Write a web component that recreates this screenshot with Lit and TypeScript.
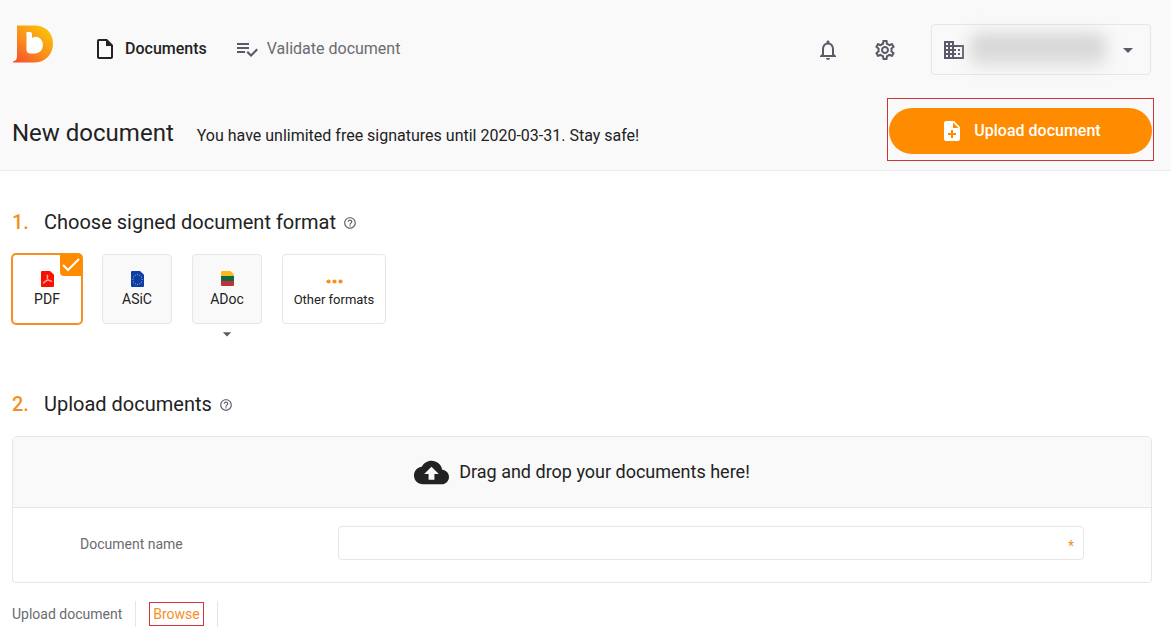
import { LitElement, html, css, svg, nothing } from "lit";
import { customElement, property, state } from "lit/decorators.js";
import { classMap } from "lit/directives/class-map.js";

const ICONS: Record<string, string> = {
  file: "M14 2H6c-1.1 0-2 .9-2 2v16c0 1.1.9 2 2 2h12c1.1 0 2-.9 2-2V8l-6-6zM6 20V4h7v5h5v11H6z",
  validate:
    "M14 10H2v2h12v-2zm0-4H2v2h12V6zM2 16h8v-2H2v2zm19.5-4.5L23 13l-6.99 7-4.51-4.5L13 14l3.01 3 5.49-5.5z",
  bell: "M12 22c1.1 0 2-.9 2-2h-4c0 1.1.9 2 2 2zm6-6v-5c0-3.07-1.63-5.64-4.5-6.32V4c0-.83-.67-1.5-1.5-1.5s-1.5.67-1.5 1.5v.68C7.64 5.36 6 7.92 6 11v5l-2 2v1h16v-1l-2-2zm-2 1H8v-6c0-2.48 1.51-4.5 4-4.5s4 2.02 4 4.5v6z",
  settings:
    "M19.43 12.98c.04-.32.07-.64.07-.98 0-.34-.03-.66-.07-.98l2.11-1.65c.19-.15.24-.42.12-.64l-2-3.46c-.09-.16-.26-.25-.44-.25-.06 0-.12.01-.17.03l-2.49 1c-.52-.4-1.08-.73-1.69-.98l-.38-2.65C14.46 2.18 14.25 2 14 2h-4c-.25 0-.46.18-.49.42l-.38 2.65c-.61.25-1.17.59-1.69.98l-2.49-1c-.06-.02-.12-.03-.18-.03-.17 0-.34.09-.43.25l-2 3.46c-.13.22-.07.49.12.64l2.11 1.65c-.04.32-.07.65-.07.98 0 .33.03.66.07.98l-2.11 1.65c-.19.15-.24.42-.12.64l2 3.46c.09.16.26.25.44.25.06 0 .12-.01.17-.03l2.49-1c.52.4 1.08.73 1.69.98l.38 2.65c.03.24.24.42.49.42h4c.25 0 .46-.18.49-.42l.38-2.65c.61-.25 1.17-.59 1.69-.98l2.49 1c.06.02.12.03.18.03.17 0 .34-.09.43-.25l2-3.46c.12-.22.07-.49-.12-.64l-2.11-1.65zm-1.98-1.71c.04.31.05.52.05.73 0 .21-.02.43-.05.73l-.14 1.13.89.7 1.08.84-.7 1.21-1.27-.51-1.04-.42-.9.68c-.43.32-.84.56-1.25.73l-1.06.43-.16 1.13-.2 1.35h-1.4l-.19-1.35-.16-1.13-1.06-.43c-.43-.18-.83-.41-1.23-.71l-.91-.7-1.06.43-1.27.51-.7-1.21 1.08-.84.89-.7-.14-1.13c-.03-.31-.05-.54-.05-.74s.02-.43.05-.73l.14-1.13-.89-.7-1.08-.84.7-1.21 1.27.51 1.04.42.9-.68c.43-.32.84-.56 1.25-.73l1.06-.43.16-1.13.2-1.35h1.39l.19 1.35.16 1.13 1.06.43c.43.18.83.41 1.23.71l.91.7 1.06-.43 1.27-.51.7 1.21-1.07.85-.89.7.14 1.13zM12 8c-2.21 0-4 1.79-4 4s1.79 4 4 4 4-1.79 4-4-1.79-4-4-4zm0 6c-1.1 0-2-.9-2-2s.9-2 2-2 2 .9 2 2-.9 2-2 2z",
  business:
    "M12 7V3H2v18h20V7H12zM6 19H4v-2h2v2zm0-4H4v-2h2v2zm0-4H4V9h2v2zm0-4H4V5h2v2zm4 12H8v-2h2v2zm0-4H8v-2h2v2zm0-4H8V9h2v2zm0-4H8V5h2v2zm10 12h-8v-2h2v-2h-2v-2h2v-2h-2V9h8v10zm-2-8h-2v2h2v-2zm0 4h-2v2h2v-2z",
  add: "M14 2H6c-1.1 0-1.99.9-1.99 2L4 20c0 1.1.89 2 1.99 2H18c1.1 0 2-.9 2-2V8l-6-6zm2 14h-3v3h-2v-3H8v-2h3v-3h2v3h3v2zm-3-7V3.5L18.5 9H13z",
  cloud:
    "M19.35 10.04C18.67 6.59 15.64 4 12 4 9.11 4 6.6 5.64 5.35 8.04 2.34 8.36 0 10.91 0 14c0 3.31 2.69 6 6 6h13c2.76 0 5-2.24 5-5 0-2.64-2.05-4.78-4.65-4.96zM14 13v4h-4v-4H7l5-5 5 5h-3z",
  help: "M11 18h2v-2h-2v2zm1-16C6.48 2 2 6.48 2 12s4.48 10 10 10 10-4.48 10-10S17.52 2 12 2zm0 18c-4.41 0-8-3.59-8-8s3.59-8 8-8 8 3.59 8 8-3.59 8-8 8zm0-14c-2.21 0-4 1.79-4 4h2c0-1.1.9-2 2-2s2 .9 2 2c0 2-3 1.75-3 5h2c0-2.25 3-2.5 3-5 0-2.21-1.79-4-4-4z",
  caret: "M7 10l5 5 5-5z",
};

@customElement("ui-icon")
class UiIcon extends LitElement {
  @property() name = "";
  static styles = css`
    :host {
      display: inline-block;
      flex: none;
      width: 24px;
      height: 24px;
    }
    svg {
      display: block;
      width: 100%;
      height: 100%;
      fill: currentColor;
    }
  `;
  render() {
    return html`<svg viewBox="0 0 24 24" aria-hidden="true"><path d=${ICONS[this.name] ?? ""}></path></svg>`;
  }
}

// Gold stars of the EU flag, set on a circle.
const stars = Array.from({ length: 12 }, (_, i) => {
  const a = (i * Math.PI) / 6;
  return svg`<circle cx=${6.5 + 4.6 * Math.sin(a)} cy=${8.5 - 5 * Math.cos(a)} r="0.5" fill="#d8d27a"></circle>`;
});

const SHEET = "M1 0H9l4 3.8V15a1 1 0 0 1-1 1H1A1 1 0 0 1 0 15V1A1 1 0 0 1 1 0z";

const formatIcons: Record<string, unknown> = {
  pdf: html`<svg class="glyph" viewBox="0 0 13 16" aria-hidden="true">
    <path fill="#fa0f00" d=${SHEET}></path>
    <path
      fill="none"
      stroke="#fff"
      stroke-width="0.6"
      stroke-linejoin="round"
      d="M2.300 12.200c-.8-.7.9-2 3.700-2.600 2.700-.5 5-.2 4.900.6-.2 1.100-2.900-.2-4-2.100C5.900 6.500 5.600 4 6.300 3.900c1-.1.500 2.900-.5 5-1 2.100-2.600 4-3.500 3.300z"
    ></path>
  </svg>`,
  asic: html`<svg class="glyph" viewBox="0 0 13 16" aria-hidden="true">
    <path fill="#0b3ea8" d=${SHEET}></path>
    ${stars}
  </svg>`,
  adoc: html`<svg class="glyph" viewBox="0 0 13 16" aria-hidden="true">
    <path fill="#fbb91f" d="M1 0H9.500L13 3.500V5H0V1A1 1 0 0 1 1 0z"></path>
    <path fill="#0a6b45" d="M0 5h13v5H0z"></path>
    <path fill="#c1313a" d="M0 10h13v4a1 1 0 0 1-1 1H1a1 1 0 0 1-1-1z"></path>
  </svg>`,
  other: html`<svg class="glyph dots" viewBox="0 0 17 5" aria-hidden="true">
    <circle cx="2.500" cy="2.500" r="2.100"></circle>
    <circle cx="8.500" cy="2.500" r="2.100"></circle>
    <circle cx="14.500" cy="2.500" r="2.100"></circle>
  </svg>`,
};

const formats = [
  { id: "pdf", label: "PDF" },
  { id: "asic", label: "ASiC" },
  { id: "adoc", label: "ADoc", more: true },
];

@customElement("app-root")
class AppRoot extends LitElement {
  @state() private format = "pdf";

  static styles = css`
    :host {
      display: block;
      font-family: Roboto, "Liberation Sans", sans-serif;
      font-size: 16px;
      line-height: 20px;
      color: #222;
      background: #fff;
    }
    * {
      box-sizing: border-box;
    }
    button,
    input {
      font: inherit;
      color: inherit;
    }
    button {
      border: 0;
      padding: 0;
      background: none;
      cursor: pointer;
    }
    a {
      color: inherit;
      text-decoration: none;
    }
    h1,
    h2,
    p {
      margin: 0;
      font-weight: 400;
    }

    .header {
      padding: 24px 17px 9px 12px;
      background: #f9f9f9;
      border-bottom: 1px solid #ebebeb;
    }
    .topbar {
      display: flex;
      align-items: center;
      padding-right: 3px;
    }
    .home {
      align-self: flex-start;
      margin-right: 39px;
    }
    .logo {
      display: block;
      width: 42px;
      height: 40px;
    }
    .nav {
      display: flex;
      gap: 28px;
      padding-bottom: 2px;
    }
    .nav a {
      display: flex;
      align-items: center;
      gap: 8px;
      color: #6b6b70;
    }
    .nav a.current {
      font-weight: 500;
      color: #222;
    }
    .nav ui-icon {
      color: #5a5a68;
    }
    .nav .current ui-icon {
      color: #222;
    }
    .tools {
      display: flex;
      align-items: center;
      gap: 33px;
      margin-left: auto;
      color: #5a5a68;
    }
    .tools button {
      display: flex;
      align-items: center;
    }
    .tools .account {
      width: 220px;
      height: 51px;
      margin-left: 1px;
      padding: 0 10px;
      border: 1px solid #e6e6e6;
      border-radius: 4px;
    }
    .redacted {
      flex: 1;
      height: 32px;
      margin: 0 10px 0 4px;
      border-radius: 8px;
      background: linear-gradient(#cdcdcd, #dadada 50%, #dfdfdf);
      filter: blur(8px);
    }

    .titlebar {
      display: flex;
      align-items: center;
      justify-content: space-between;
      margin-top: 23px;
    }
    .headline {
      display: flex;
      align-items: baseline;
      gap: 23px;
      padding-top: 7px;
    }
    h1 {
      font-size: 24px;
      line-height: 32px;
    }
    .marked {
      border: 1px solid #d0333c;
    }
    .cta {
      padding: 9px 1px 6px;
    }
    .upload {
      display: flex;
      align-items: center;
      justify-content: center;
      gap: 10px;
      width: 263px;
      height: 46px;
      border-radius: 23px;
      background: #ff8c00;
      color: #fff;
      font-weight: 500;
    }

    .content {
      padding: 39px 19px 10px 12px;
    }
    .step {
      display: flex;
      align-items: center;
      font-size: 20px;
      line-height: 24px;
    }
    .step .number {
      width: 32px;
      font-weight: 500;
      color: #f5901f;
    }
    .step .help {
      margin-left: 7px;
      padding-top: 2px;
      color: #5a5a68;
    }
    .help ui-icon {
      display: block;
      width: 14px;
      height: 14px;
    }

    .formats {
      display: flex;
      gap: 20px;
      height: 158px;
      margin: 0;
      padding: 20px 0 0;
      border: 0;
    }
    .tile {
      position: relative;
      display: flex;
      flex-direction: column;
      align-items: center;
      justify-content: center;
      gap: 4px;
      min-width: 70px;
      height: 70px;
      padding: 0 10px;
      border: 1px solid #e6e6e6;
      border-radius: 4px;
      background: #f9f9f9;
      font-size: 14px;
      line-height: 16px;
      cursor: pointer;
    }
    .tile input {
      position: absolute;
      inset: 0;
      width: 100%;
      height: 100%;
      margin: 0;
      opacity: 0;
      cursor: pointer;
    }
    .tile.selected {
      border-color: #f5901f;
      background: #fff;
      box-shadow: 0 0 0 1px #f5901f;
    }
    .tile.other {
      min-width: 104px;
      background: #fff;
      font-size: 13px;
      gap: 8px;
      padding-top: 8px;
    }
    .tick {
      position: absolute;
      top: -1px;
      right: -1px;
      width: 22px;
      height: 22px;
      border-radius: 0 3px 0 4px;
      background: #ff8c00;
    }
    .more {
      display: flex;
      flex-direction: column;
      align-items: center;
    }
    .more ui-icon {
      width: 20px;
      height: 20px;
      color: #5a5a68;
    }
    .glyph {
      width: 13px;
      height: 16px;
    }
    .glyph.dots {
      width: 17px;
      height: 5px;
      fill: #f5901f;
    }

    .panel {
      margin-top: 20px;
      border: 1px solid #e6e6e6;
      border-radius: 4px;
    }
    .drop {
      display: flex;
      align-items: center;
      justify-content: center;
      gap: 10px;
      height: 71px;
      border-bottom: 1px solid #e6e6e6;
      background: #f9f9f9;
      font-size: 18px;
    }
    .drop ui-icon {
      width: 35px;
      height: 35px;
    }
    .field {
      display: grid;
      grid-template-columns: 258px 1fr;
      align-items: center;
      padding: 18px 67px 22px;
      font-size: 14px;
      color: #6b6b70;
    }
    .field label {
      padding-top: 2px;
    }
    .box {
      position: relative;
    }
    .box input {
      display: block;
      width: 100%;
      height: 34px;
      padding: 0 24px 0 10px;
      border: 1px solid #e6e6e6;
      border-radius: 4px;
      background: #fff;
    }
    .required {
      position: absolute;
      top: 10px;
      right: 10px;
      color: #f5901f;
    }
    .actions {
      display: flex;
      align-items: center;
      margin-top: 18px;
      font-size: 14px;
      color: #6b6b70;
    }
    .actions .cell {
      display: flex;
      align-items: center;
      height: 26px;
      padding-right: 13px;
      margin-right: 13px;
      border-right: 1px solid #e6e6e6;
    }
    .browse {
      height: 24px;
      padding: 0 3px;
      color: #f5901f;
    }
  `;

  private renderTile(id: string, label: string) {
    const selected = this.format === id;
    return html`<label class=${classMap({ tile: true, selected, other: id === "other" })}>
      <input
        type="radio"
        name="format"
        value=${id}
        .checked=${selected}
        @change=${() => (this.format = id)}
      />
      ${formatIcons[id]}
      <span>${label}</span>
      ${selected
        ? html`<svg class="tick" viewBox="0 0 22 22" aria-hidden="true">
            <path d="M3 11l5 5L19 5" fill="none" stroke="#fff" stroke-width="2"></path>
          </svg>`
        : nothing}
    </label>`;
  }

  render() {
    return html`
      <header class="header">
        <div class="topbar">
          <a class="home" href="#" aria-label="Home">
            <svg class="logo" viewBox="0 0 42 40" aria-hidden="true">
              <defs>
                <linearGradient id="flame" x1="0.1" y1="1" x2="0.85" y2="0.1">
                  <stop offset="0" stop-color="#f4502c"></stop>
                  <stop offset="0.45" stop-color="#f98a1c"></stop>
                  <stop offset="1" stop-color="#fcc00c"></stop>
                </linearGradient>
              </defs>
              <path
                fill="url(#flame)"
                d="M5 1.500H22C34 1.500 41 9 41 19.500 41 31 33 38.500 22 38.500H1V37.500C4 37 5 35 5 32z"
              ></path>
              <path
                fill="#fff"
                d="M14.500 8h3.500q2 0 2 2v4c1-.8 2.300-1.200 3.500-1.200 4.500 0 7.400 3.700 7.400 8.200s-3.200 8.500-8.200 8.500h-4q-4.200 0-4.200-4z"
              ></path>
            </svg>
          </a>
          <nav class="nav">
            <a class="current" href="#documents"><ui-icon name="file"></ui-icon>Documents</a>
            <a href="#validate"><ui-icon name="validate"></ui-icon>Validate document</a>
          </nav>
          <div class="tools">
            <button aria-label="Notifications"><ui-icon name="bell"></ui-icon></button>
            <button aria-label="Settings"><ui-icon name="settings"></ui-icon></button>
            <button class="account" aria-label="Account">
              <ui-icon name="business"></ui-icon>
              <span class="redacted"></span>
              <ui-icon name="caret"></ui-icon>
            </button>
          </div>
        </div>
        <div class="titlebar">
          <div class="headline">
            <h1>New document</h1>
            <p>You have unlimited free signatures until 2020-03-31. Stay safe!</p>
          </div>
          <div class="cta marked">
            <button class="upload"><ui-icon name="add"></ui-icon>Upload document</button>
          </div>
        </div>
      </header>

      <main class="content">
        <h2 class="step">
          <span class="number">1.</span>Choose signed document format
          <button class="help" aria-label="Help"><ui-icon name="help"></ui-icon></button>
        </h2>
        <fieldset class="formats" aria-label="Signed document format">
          ${formats.map((f) =>
            f.more
              ? html`<div class="more">${this.renderTile(f.id, f.label)}<ui-icon name="caret"></ui-icon></div>`
              : this.renderTile(f.id, f.label)
          )}
          ${this.renderTile("other", "Other formats")}
        </fieldset>

        <h2 class="step">
          <span class="number">2.</span>Upload documents
          <button class="help" aria-label="Help"><ui-icon name="help"></ui-icon></button>
        </h2>
        <section class="panel">
          <div class="drop"><ui-icon name="cloud"></ui-icon>Drag and drop your documents here!</div>
          <div class="field">
            <label for="name">Document name</label>
            <div class="box">
              <input id="name" type="text" required />
              <span class="required" aria-hidden="true">*</span>
            </div>
          </div>
        </section>
        <div class="actions">
          <span class="cell">Upload document</span>
          <span class="cell"><button class="browse marked">Browse</button></span>
        </div>
      </main>
    `;
  }
}
